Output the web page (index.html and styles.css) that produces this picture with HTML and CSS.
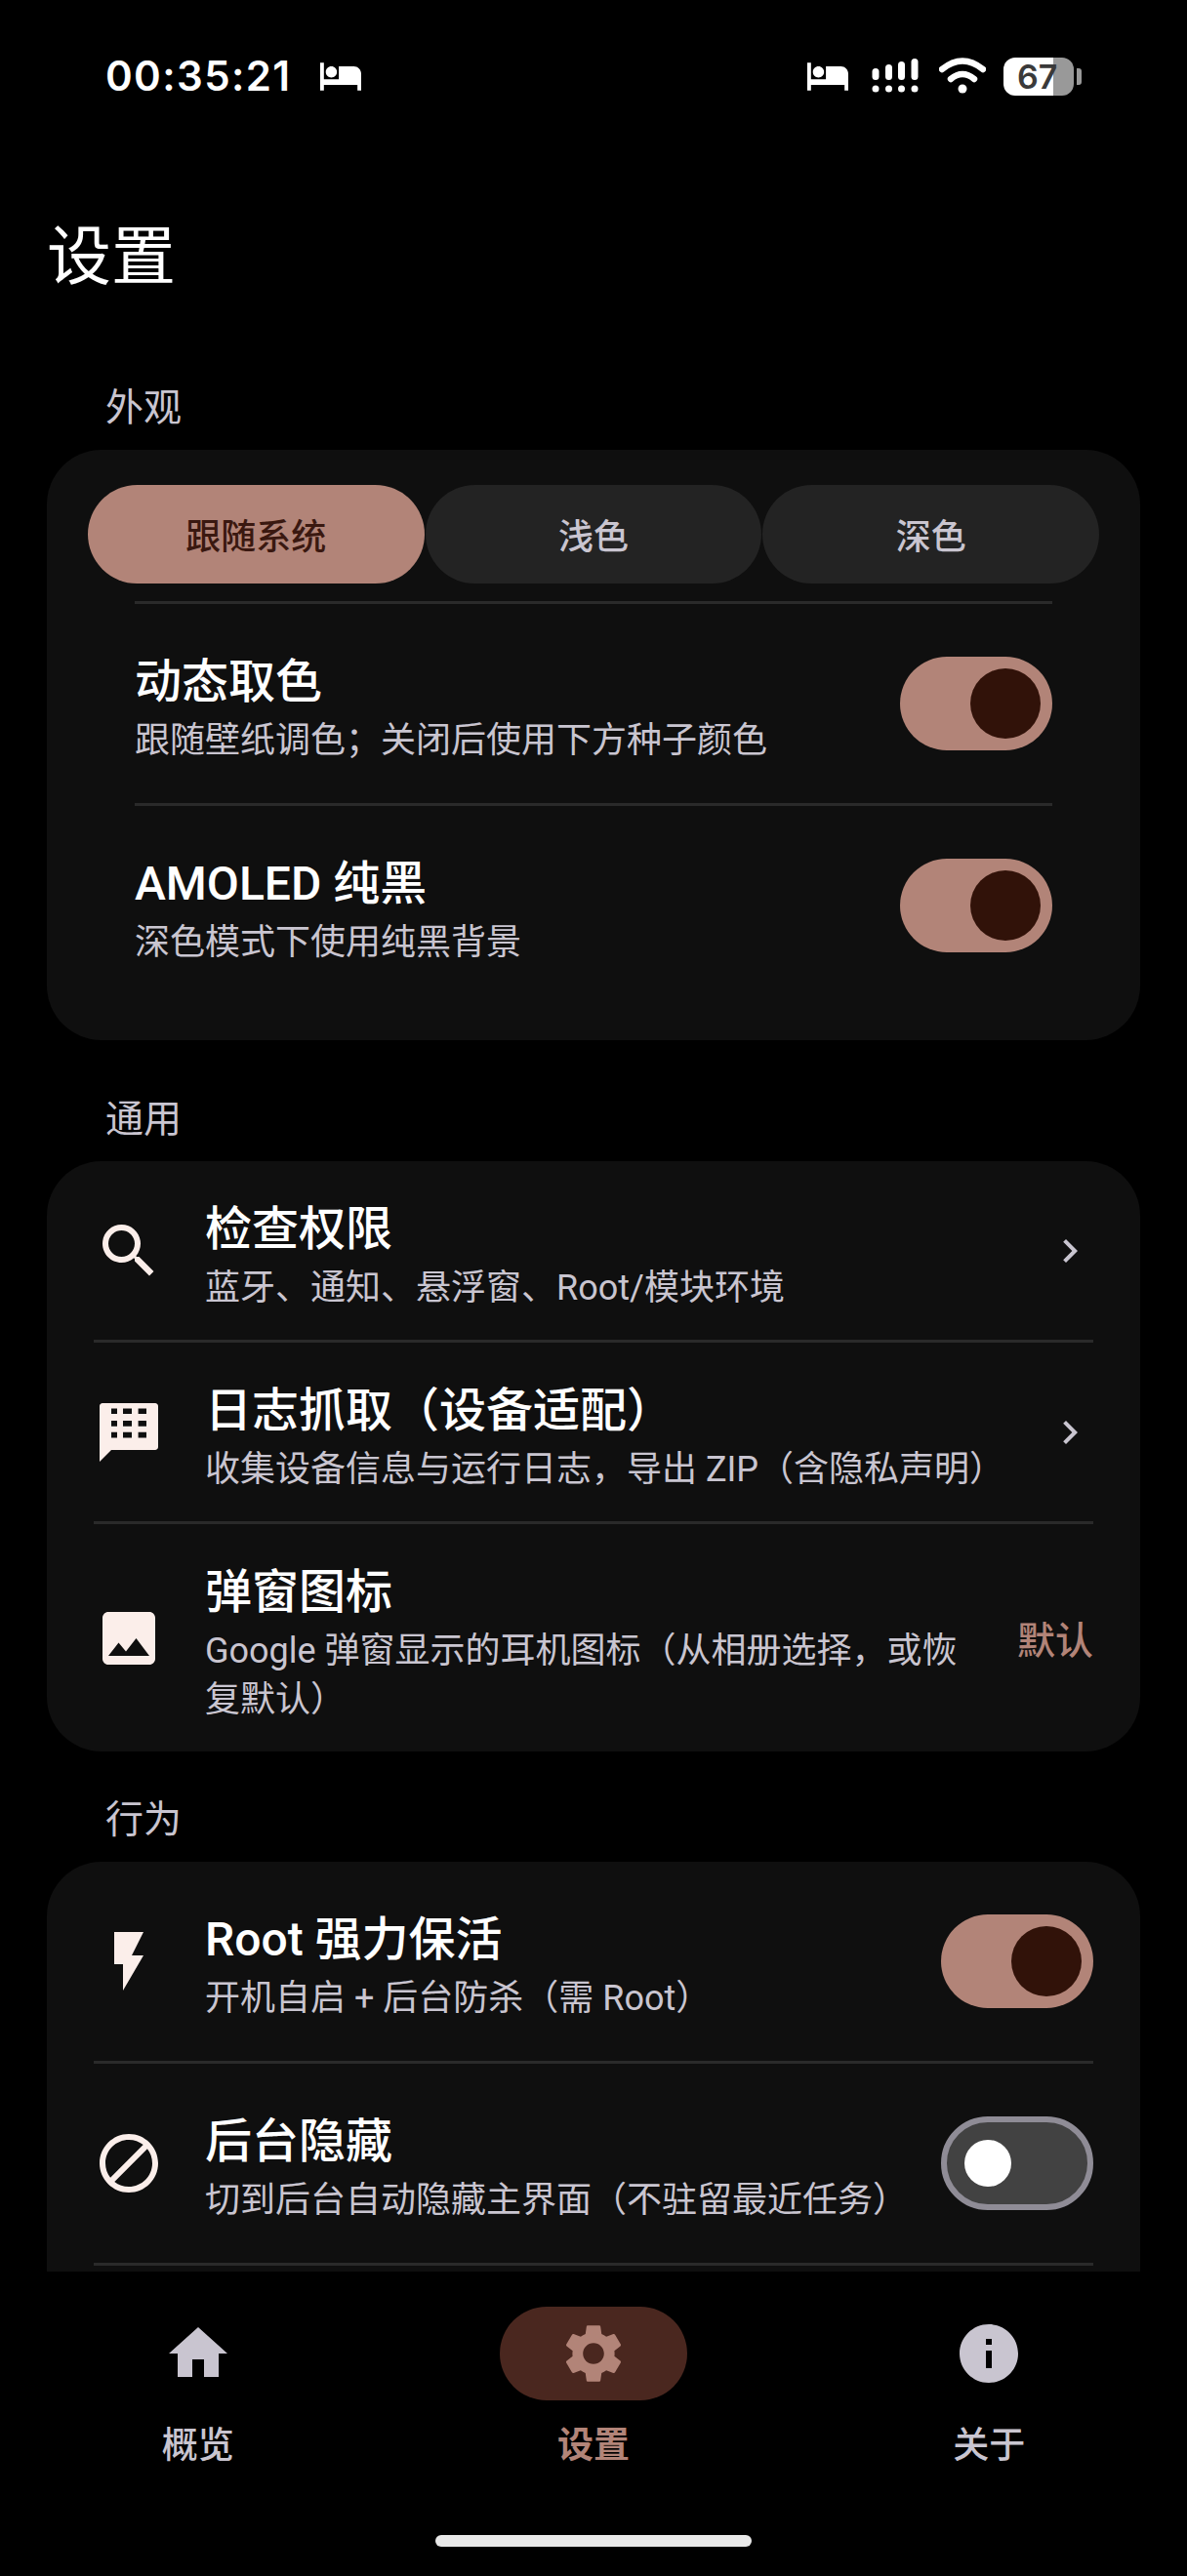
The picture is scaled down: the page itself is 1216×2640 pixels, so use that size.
FILE: index.html
```html
<!DOCTYPE html>
<html lang="zh-CN">
<head>
<meta charset="utf-8">
<title>设置</title>
<link rel="stylesheet" href="styles.css">
</head>
<body>
<div class="app">
  <main class="scroll">
    <header class="status">
      <div class="status-left">
        <span class="time">00:35:21</span>
        <svg class="bed" viewBox="1 5 22 15"><path d="M7 13c1.66 0 3-1.34 3-3S8.66 7 7 7s-3 1.34-3 3 1.34 3 3 3zm12-6h-8v7H3V5H1v15h2v-3h18v3h2v-9c0-2.21-1.79-4-4-4z"/></svg>
      </div>
      <div class="status-right">
        <svg class="bed" viewBox="1 5 22 15"><path d="M7 13c1.66 0 3-1.34 3-3S8.66 7 7 7s-3 1.34-3 3 1.34 3 3 3zm12-6h-8v7H3V5H1v15h2v-3h18v3h2v-9c0-2.21-1.79-4-4-4z"/></svg>
        <svg class="signal" viewBox="0 0 48 38">
          <rect x="0.5" y="11" width="7" height="12" rx="3.5"/>
          <rect x="14" y="7" width="7" height="16" rx="3.5"/>
          <rect x="27" y="4" width="7" height="19" rx="3.5"/>
          <rect x="40.5" y="1" width="7" height="22" rx="3.5"/>
          <circle cx="4" cy="32" r="3.5"/><circle cx="17.5" cy="32" r="3.5"/><circle cx="30.5" cy="32" r="3.5"/><circle cx="44" cy="32" r="3.5"/>
        </svg>
        <svg class="wifi" viewBox="0 0 48 38">
          <path class="wifi-arc" d="M3 12Q24 -5 45 12"/>
          <path class="wifi-arc" d="M12 22Q24 12 36 22"/>
          <circle cx="24" cy="32" r="4.5"/>
        </svg>
        <div class="battery">
          <div class="battery-body"><span class="battery-num">67</span></div>
          <div class="battery-tip"></div>
        </div>
      </div>
    </header>

    <h1 class="page-title">设置</h1>

    <h2 class="section-label">外观</h2>
    <section class="card card-appearance">
      <div class="segments">
        <div class="segment segment-on">跟随系统</div>
        <div class="segment">浅色</div>
        <div class="segment">深色</div>
      </div>
      <div class="divider divider-inset"></div>
      <div class="row row-switch row-inset">
        <div class="row-text">
          <div class="row-title">动态取色</div>
          <div class="row-sub">跟随壁纸调色；关闭后使用下方种子颜色</div>
        </div>
        <div class="toggle toggle-on"><span class="thumb"></span></div>
      </div>
      <div class="divider divider-inset"></div>
      <div class="row row-switch row-inset">
        <div class="row-text">
          <div class="row-title">AMOLED 纯黑</div>
          <div class="row-sub">深色模式下使用纯黑背景</div>
        </div>
        <div class="toggle toggle-on"><span class="thumb"></span></div>
      </div>
    </section>

    <h2 class="section-label section-label-wide">通用</h2>
    <section class="card card-list">
      <div class="row row-link">
        <svg class="row-icon" viewBox="0 0 24 24"><path d="M15.5 14h-.79l-.28-.27C15.41 12.59 16 11.11 16 9.5 16 5.91 13.09 3 9.5 3S3 5.91 3 9.5 5.91 16 9.5 16c1.61 0 3.09-.59 4.23-1.57l.27.28v.79l5 4.99L20.49 19l-4.99-5zm-6 0C7.01 14 5 11.99 5 9.5S7.01 5 9.5 5 14 7.01 14 9.5 11.99 14 9.5 14z"/></svg>
        <div class="row-text">
          <div class="row-title">检查权限</div>
          <div class="row-sub">蓝牙、通知、悬浮窗、Root/模块环境</div>
        </div>
        <svg class="chevron" viewBox="0 0 24 24"><path d="M10 6L8.59 7.41 13.17 12l-4.58 4.59L10 18l6-6z"/></svg>
      </div>
      <div class="divider"></div>
      <div class="row row-link">
        <svg class="row-icon" viewBox="0 0 24 24"><path fill-rule="evenodd" d="M21 2H3c-.55 0-1 .45-1 1v19l4-4h15c.55 0 1-.45 1-1V3c0-.55-.45-1-1-1zM6 3.8h2v1.9H6zm4 0h3v1.9h-3zm5.2 0H18v1.9h-2.8zM6 8h2v1.9H6zm4 0h3v1.9h-3zm5.2 0H18v1.9h-2.8zM6 11.9h2v1.9H6zm4 0h3v1.9h-3zm5.2 0H18v1.9h-2.8z"/></svg>
        <div class="row-text">
          <div class="row-title">日志抓取（设备适配）</div>
          <div class="row-sub">收集设备信息与运行日志，导出 ZIP（含隐私声明）</div>
        </div>
        <svg class="chevron" viewBox="0 0 24 24"><path d="M10 6L8.59 7.41 13.17 12l-4.58 4.59L10 18l6-6z"/></svg>
      </div>
      <div class="divider"></div>
      <div class="row row-link">
        <svg class="row-icon" viewBox="0 0 24 24"><path d="M21 19V5c0-1.1-.9-2-2-2H5c-1.1 0-2 .9-2 2v14c0 1.1.9 2 2 2h14c1.1 0 2-.9 2-2zM8.5 13.5l2.5 3.01L14.5 12l4.5 6H5l3.5-4.5z"/></svg>
        <div class="row-text">
          <div class="row-title">弹窗图标</div>
          <div class="row-sub">Google 弹窗显示的耳机图标（从相册选择，或恢复默认）</div>
        </div>
        <div class="row-value">默认</div>
      </div>
    </section>

    <h2 class="section-label">行为</h2>
    <section class="card card-list">
      <div class="row row-switch">
        <svg class="row-icon" viewBox="0 0 24 24"><path d="M7 2v11h3v9l7-12h-4l4-8z"/></svg>
        <div class="row-text">
          <div class="row-title">Root 强力保活</div>
          <div class="row-sub">开机自启 + 后台防杀（需 Root）</div>
        </div>
        <div class="toggle toggle-on"><span class="thumb"></span></div>
      </div>
      <div class="divider"></div>
      <div class="row row-switch">
        <svg class="row-icon" viewBox="0 0 24 24"><path d="M12 2C6.48 2 2 6.48 2 12s4.48 10 10 10 10-4.48 10-10S17.52 2 12 2zM4 12c0-4.42 3.58-8 8-8 1.85 0 3.55.63 4.9 1.69L5.69 16.9C4.63 15.55 4 13.85 4 12zm8 8c-1.85 0-3.55-.63-4.9-1.69L18.31 7.1C19.37 8.45 20 10.15 20 12c0 4.42-3.58 8-8 8z"/></svg>
        <div class="row-text">
          <div class="row-title">后台隐藏</div>
          <div class="row-sub">切到后台自动隐藏主界面（不驻留最近任务）</div>
        </div>
        <div class="toggle toggle-off"><span class="thumb"></span></div>
      </div>
      <div class="divider"></div>
      <div class="row-cut"></div>
    </section>
  </main>

  <nav class="nav">
    <div class="tabs">
      <div class="tab">
        <div class="tab-icon"><svg viewBox="0 0 24 24"><path d="M10 20v-6h4v6h5v-8h3L12 3 2 12h3v8z"/></svg></div>
        <div class="tab-label">概览</div>
      </div>
      <div class="tab tab-active">
        <div class="tab-icon"><svg viewBox="0 0 24 24"><path d="M19.14 12.94c.04-.3.06-.61.06-.94 0-.32-.02-.64-.07-.94l2.03-1.58c.18-.14.23-.41.12-.61l-1.92-3.32c-.12-.22-.37-.29-.59-.22l-2.39.96c-.5-.38-1.03-.7-1.62-.94l-.36-2.54c-.04-.24-.24-.41-.48-.41h-3.84c-.24 0-.43.17-.47.41l-.36 2.54c-.59.24-1.13.57-1.62.94l-2.39-.96c-.22-.08-.47 0-.59.22L2.74 8.87c-.12.21-.08.47.12.61l2.03 1.58c-.05.3-.09.63-.09.94s.02.64.07.94l-2.03 1.58c-.18.14-.23.41-.12.61l1.92 3.32c.12.22.37.29.59.22l2.39-.96c.5.38 1.03.7 1.62.94l.36 2.54c.05.24.24.41.48.41h3.84c.24 0 .44-.17.47-.41l.36-2.54c.59-.24 1.13-.56 1.62-.94l2.39.96c.22.08.47 0 .59-.22l1.92-3.32c.12-.22.07-.47-.12-.61l-2.01-1.58zM12 15.6c-1.98 0-3.6-1.62-3.6-3.6s1.62-3.6 3.6-3.6 3.6 1.62 3.6 3.6-1.62 3.6-3.6 3.6z"/></svg></div>
        <div class="tab-label">设置</div>
      </div>
      <div class="tab">
        <div class="tab-icon"><svg viewBox="0 0 24 24"><path d="M12 2C6.48 2 2 6.48 2 12s4.48 10 10 10 10-4.48 10-10S17.52 2 12 2zm1 15h-2v-6h2v6zm0-8h-2V7h2v2z"/></svg></div>
        <div class="tab-label">关于</div>
      </div>
    </div>
    <div class="home-bar"></div>
  </nav>
</div>
</body>
</html>
```

FILE: styles.css
```css
* { box-sizing: border-box; }
html, body { margin: 0; padding: 0; background: #000; }
body {
  font-family: Roboto, "Noto Sans CJK SC", sans-serif;
  color: #fff;
}
.app { width: 1216px; height: 2640px; display: flex; flex-direction: column; overflow: hidden; }
.scroll { height: 2328px; overflow: hidden; flex: none; }

/* status bar */
.status { height: 156px; display: flex; align-items: center; justify-content: space-between; padding: 0 108px 0 108px; }
.status-left { display: flex; align-items: center; gap: 30px; }
.status-right { display: flex; align-items: center; }
.time { font-family: Inter, sans-serif; font-size: 42px; font-weight: 600; line-height: 48px; letter-spacing: 1.4px; }
.bed { width: 42px; height: 29px; fill: #fff; display: block; }
.signal { width: 48px; height: 38px; fill: #fff; margin-left: 24px; display: block; }
.wifi { width: 48px; height: 38px; fill: #fff; margin-left: 21px; display: block; }
.wifi-arc { fill: none; stroke: #fff; stroke-width: 6.5; stroke-linecap: round; }
.battery { display: flex; align-items: center; margin-left: 18px; }
.battery-body {
  width: 72px; height: 39px; border-radius: 12px;
  background: linear-gradient(90deg, #fff 0 51px, #999 51px 72px);
  display: flex; align-items: center; padding-left: 14px;
}
.battery-num { font-family: Inter, sans-serif; font-size: 34px; font-weight: 600; line-height: 39px; color: #3a3a3a; }
.battery-tip { width: 5px; height: 17px; margin-left: 3px; border-radius: 0 3px 3px 0; background: #999; }

/* headings */
.page-title { margin: 63px 0 0 48px; font-size: 66px; line-height: 90px; font-weight: 400; }
.section-label { margin: 84px 0 18px 108px; font-size: 39px; line-height: 50px; font-weight: 400; color: #c9c5d0; }
.card + .section-label { margin-top: 45px; }
.card + .section-label-wide { margin-top: 56px; }

/* cards */
.card { margin: 0 48px; background: #0f0f0f; border-radius: 56px; }
.card-appearance { padding: 36px 0; }
.card-list { padding: 0 48px; }

/* segmented control */
.segments { display: grid; grid-template-columns: repeat(3, 1fr); gap: 1px; margin: 0 42px 18px; }
.segment {
  height: 101px; padding-bottom: 2px; border-radius: 51px; background: #232323; color: #c9c5d0;
  font-size: 36px; font-weight: 500; display: flex; align-items: center; justify-content: center;
}
.segment-on { background: #b28478; color: #3a1810; }

/* rows */
.divider { height: 3px; background: #2a2a2a; }
.divider-inset { margin: 0 90px; }
.row { display: flex; align-items: center; }
.row-inset { margin: 0 90px; }
.row-link { padding: 28.5px 0; }
.row-switch { padding: 39px 0; }
.row-icon { width: 72px; height: 72px; flex: none; fill: #fbeeea; margin-right: 42px; }
.row-text { flex: 1; min-width: 0; padding-top: 6px; }
.row-title { font-size: 48px; line-height: 70px; font-weight: 500; color: #fff; }
.row-sub { font-size: 36px; line-height: 50px; color: #c9c5d0; }
.row-value { flex: none; margin-left: 36px; padding-top: 6px; font-size: 39px; line-height: 50px; font-weight: 500; color: #b28478; }
.chevron { width: 48px; height: 48px; flex: none; fill: #c9c5d0; margin-left: 24px; }
.row-cut { height: 100px; }

/* toggles */
.toggle { width: 156px; height: 96px; flex: none; border-radius: 48px; display: flex; align-items: center; margin-left: 24px; }
.thumb { display: block; border-radius: 50%; }
.toggle-on { background: #b28478; justify-content: flex-end; padding-right: 12px; }
.toggle-on .thumb { width: 72px; height: 72px; background: #311209; }
.toggle-off { background: #424242; border: 6px solid #8f8c96; padding-left: 18px; }
.toggle-off .thumb { width: 48px; height: 48px; background: #fff; }

/* bottom nav */
.nav { flex: 1; display: flex; flex-direction: column; align-items: center; padding-top: 36px; background: #000; }
.tabs { display: grid; grid-template-columns: repeat(3, 1fr); width: 1216px; }
.tab { display: flex; flex-direction: column; align-items: center; }
.tab-icon { width: 192px; height: 96px; border-radius: 48px; display: flex; align-items: center; justify-content: center; }
.tab-icon svg { width: 72px; height: 72px; fill: #c9c5d0; display: block; }
.tab-label { margin-top: 22px; font-size: 37px; line-height: 50px; font-weight: 500; color: #c9c5d0; }
.tab-active .tab-icon { background: #4a271f; }
.tab-active .tab-icon svg { fill: #b28478; }
.tab-active .tab-label { color: #b28478; font-weight: 700; }
.home-bar { width: 324px; height: 12px; margin-top: 66px; border-radius: 6px; background: #e8e8e8; }
```
